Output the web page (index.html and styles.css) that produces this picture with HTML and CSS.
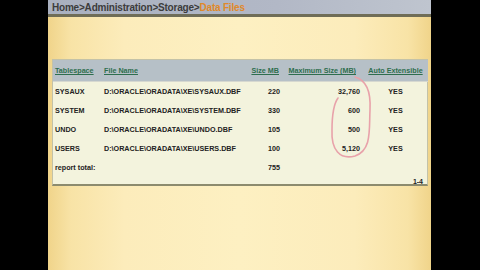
FILE: index.html
```html
<!DOCTYPE html>
<html>
<head>
<meta charset="utf-8">
<link rel="stylesheet" href="styles.css">
</head>
<body>
<div class="screen">
  <div class="crumb">Home&gt;Administration&gt;Storage&gt;<span class="cur">Data Files</span></div>
  <div class="page">
    <div class="panel">
      <table class="grid">
        <colgroup>
          <col class="c1"><col class="c2"><col class="c3"><col class="c4"><col class="c5">
        </colgroup>
        <thead>
          <tr class="head">
            <th class="l"><a>Tablespace</a></th>
            <th class="l"><a>File Name</a></th>
            <th class="r"><a>Size MB</a></th>
            <th class="r hmax"><a>Maximum Size (MB)</a></th>
            <th class="c"><a>Auto Extensible</a></th>
          </tr>
        </thead>
        <tbody>
          <tr><td class="l">SYSAUX</td><td class="l">D:\ORACLE\ORADATA\XE\SYSAUX.DBF</td><td class="r">220</td><td class="r">32,760</td><td class="c">YES</td></tr>
          <tr><td class="l">SYSTEM</td><td class="l">D:\ORACLE\ORADATA\XE\SYSTEM.DBF</td><td class="r">330</td><td class="r">600</td><td class="c">YES</td></tr>
          <tr><td class="l">UNDO</td><td class="l">D:\ORACLE\ORADATA\XE\UNDO.DBF</td><td class="r">105</td><td class="r">500</td><td class="c">YES</td></tr>
          <tr><td class="l">USERS</td><td class="l">D:\ORACLE\ORADATA\XE\USERS.DBF</td><td class="r">100</td><td class="r">5,120</td><td class="c">YES</td></tr>
          <tr class="total"><td class="l" colspan="2">report total:</td><td class="r">755</td><td></td><td></td></tr>
        </tbody>
      </table>
      <div class="pager">1-4</div>
    </div>
  </div>
  <svg class="mark" width="383" height="270" viewBox="48 0 383 270">
    <path d="M355 77 C 366 80, 371 92, 370 110 C 369 130, 372 150, 355 156 C 340 160, 331 150, 332 130 C 332 115, 333 105, 338 98" fill="none" stroke="#e8a2aa" stroke-width="1.6" stroke-linecap="round"/>
  </svg>
</div>
</body>
</html>
```

FILE: styles.css
```css
html, body {
  margin: 0;
  padding: 0;
  background: #000;
  width: 480px;
  height: 270px;
  overflow: hidden;
}

.screen {
  position: relative;
  margin-left: 48px;
  width: 383px;
  height: 270px;
  display: flex;
  flex-direction: column;
  background: #f7e3a4;
}

.crumb {
  height: 14px;
  line-height: 15px;
  background: linear-gradient(to right, #a9b0bf 0, #b2b8c6 60%, #bfc5cf 100%);
  border-bottom: 3px solid #6f6d57;
  font-family: "Liberation Sans", Arial, sans-serif;
  font-weight: bold;
  font-size: 10px;
  color: #3c3c3c;
  padding-left: 4px;
  letter-spacing: -0.2px;
}

.crumb .cur {
  color: #e0892a;
}

.page {
  flex: 1;
  padding: 42px 3px 0 4px;
  background: linear-gradient(to right, #f0d48a 0, #f8e3a6 6%, #fcecbb 20%, #fdf0c2 50%, #fcecbb 80%, #f8e3a6 94%, #f0d48a 100%);
}

.panel {
  background: #f3f3dd;
  border: 1px solid #c3c2a8;
  border-bottom: 2px solid #8c8b6e;
  height: 124px;
  display: flex;
  flex-direction: column;
}

.grid {
  width: 100%;
  border-collapse: collapse;
  font-family: "Liberation Sans", Arial, sans-serif;
  font-size: 7.2px;
  font-weight: bold;
  color: #222;
  table-layout: fixed;
}

.c1 { width: 49px; }
.c2 { width: 144px; }
.c3 { width: 36px; }
.c4 { width: 80px; }
.c5 { width: 66px; }

.grid th, .grid td {
  padding: 0 1px 0 2px;
  white-space: nowrap;
  overflow: visible;
}

.head th {
  height: 21px;
  background: #b6c0c7;
  border-bottom: 1px solid #d6d8d0;
}

.head a {
  color: #2e6e4e;
  text-decoration: underline;
}

.head th.r { padding-right: 3px; }
.head th.hmax { padding-right: 6px; }

.grid tbody td {
  height: 19px;
}

.l { text-align: left; }
.r { text-align: right; }
.c { text-align: center; }

.grid td.r { padding-right: 2px; }

.pager {
  text-align: right;
  font-family: "Liberation Sans", Arial, sans-serif;
  font-size: 7px;
  font-weight: bold;
  color: #222;
  padding: 0 4px 0 0;
  margin-top: auto;
  line-height: 9px;
}

.mark {
  position: absolute;
  left: 0;
  top: 0;
  pointer-events: none;
}
```
